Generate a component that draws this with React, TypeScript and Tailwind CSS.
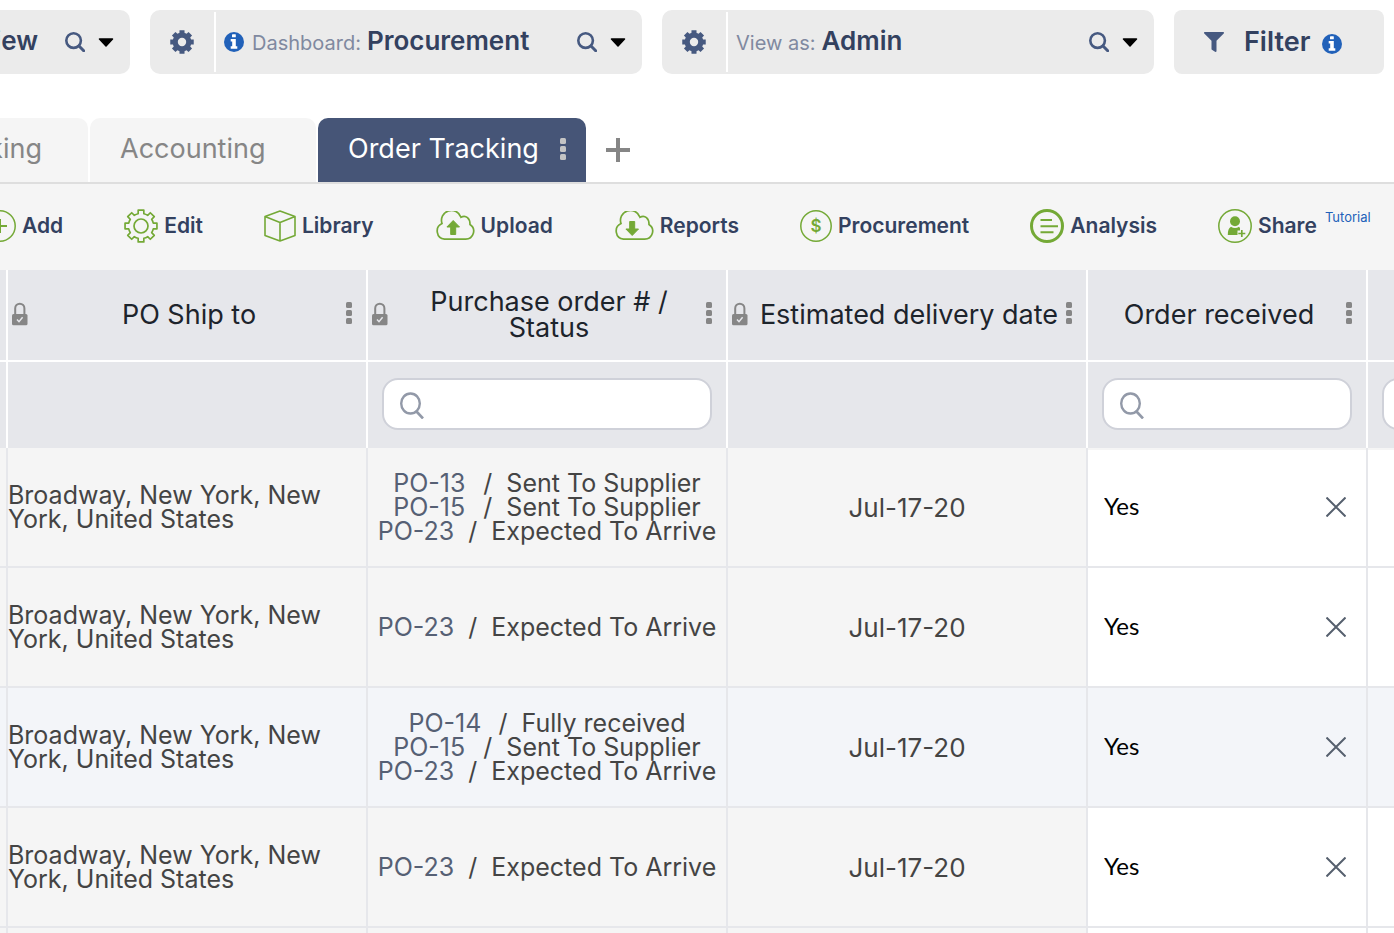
import type { ReactNode } from 'react';
import { FaFilter } from 'react-icons/fa';

interface OrderLine {
  po: string;
  status: string;
}

interface Row {
  id: number;
  shipTo: string;
  orders: OrderLine[];
  date: string;
  received: string;
  highlighted?: boolean;
}

const address = 'Broadway, New York, New York, United States';
const po13 = { po: 'PO-13', status: 'Sent To Supplier' };
const po14 = { po: 'PO-14', status: 'Fully received' };
const po15 = { po: 'PO-15', status: 'Sent To Supplier' };
const po23 = { po: 'PO-23', status: 'Expected To Arrive' };

const rows: Row[] = [
  { id: 1, shipTo: address, orders: [po13, po15, po23], date: 'Jul-17-20', received: 'Yes' },
  { id: 2, shipTo: address, orders: [po23], date: 'Jul-17-20', received: 'Yes' },
  { id: 3, shipTo: address, orders: [po14, po15, po23], date: 'Jul-17-20', received: 'Yes', highlighted: true },
  { id: 4, shipTo: address, orders: [po23], date: 'Jul-17-20', received: 'Yes' },
];

// Outline of a cog with flat-topped teeth
function gearPath(center: number, outer: number, root: number, tip: number, base: number) {
  const point = (radius: number, degrees: number) => {
    const angle = (degrees * Math.PI) / 180;
    return `${(center + radius * Math.cos(angle)).toFixed(2)} ${(center + radius * Math.sin(angle)).toFixed(2)}`;
  };
  const parts: string[] = [];
  for (let i = 0; i < 8; i++) {
    const a = i * 45;
    parts.push(
      `${i === 0 ? 'M' : `A${root} ${root} 0 0 1 `}${point(root, a - base)}`,
      `L${point(outer, a - tip)}`,
      `L${point(outer, a + tip)}`,
      `L${point(root, a + base)}`
    );
  }
  return `${parts.join('')}A${root} ${root} 0 0 1 ${point(root, -base)}Z`;
}

function CogIcon() {
  return (
    <svg className="size-6 shrink-0 fill-[#465980]" viewBox="0 0 24 24" aria-hidden="true">
      <path
        fillRule="evenodd"
        d={`${gearPath(12, 12, 9.4, 12, 16)}M12 7.8a4.2 4.2 0 1 0 0 8.4a4.2 4.2 0 1 0 0-8.4Z`}
      />
    </svg>
  );
}

function InfoIcon() {
  return (
    <svg className="size-5 shrink-0" viewBox="0 0 20 20" aria-hidden="true">
      <circle cx="10" cy="10" r="10" fill="#2161b9" />
      <rect x="8" y="2.300" width="3.800" height="3" rx=".4" fill="#fff" />
      <path d="M6.700 7h5.100v7.300h1.500v2.400H6.700v-2.400h1.500V9.400H6.700z" fill="#fff" />
    </svg>
  );
}

function SearchIcon() {
  return (
    <svg className="size-5 shrink-0" viewBox="0 0 20 20" fill="none" stroke="#465980" aria-hidden="true">
      <circle cx="8.6" cy="8.6" r="7.3" strokeWidth="2.600" />
      <path d="M14 14l4.700 4.700" strokeWidth="3" strokeLinecap="round" />
    </svg>
  );
}

function CaretIcon() {
  return (
    <svg className="h-[10px] w-4 shrink-0" viewBox="0 0 16 10" aria-hidden="true">
      <path d="M1.500 2h13L8 9z" stroke="#000" strokeWidth="1.500" strokeLinejoin="round" />
    </svg>
  );
}

function Dots({ className }: { className: string }) {
  return (
    <svg className={className} viewBox="0 0 6 22" fill="currentColor" aria-hidden="true">
      <rect width="6" height="6" rx="1.5" />
      <rect y="8" width="6" height="6" rx="1.5" />
      <rect y="16" width="6" height="6" rx="1.5" />
    </svg>
  );
}

function LockIcon() {
  return (
    <svg className="mb-0.5 h-6 w-4 shrink-0" viewBox="0 0 16 24" fill="none" aria-hidden="true">
      <path d="M3.200 13V6.300a4.600 4.600 0 0 1 9.200 0V13" stroke="#868686" strokeWidth="2" />
      <rect y="12" width="15.500" height="11.300" rx="1.500" fill="#868686" />
      <path d="M5 17.500l2 2.200l3.600-4.400" stroke="#e6e7eb" strokeWidth="1.500" />
    </svg>
  );
}

function CloudIcon({ arrow }: { arrow: string }) {
  return (
    <svg className="h-[30px] w-10" viewBox="0 0 40 30" aria-hidden="true">
      <path
        d="M9.500 28.200H30.500A8 8 0 0 0 35 13.500C35.200 7.500 31 3.500 26 6.200A9.800 9.800 0 0 0 7 12.600A8.200 8.200 0 0 0 9.500 28.200Z"
        fill="none"
        stroke="#74a936"
        strokeWidth="1.700"
      />
      <path d={arrow} fill="#74a936" stroke="#74a936" strokeLinejoin="round" />
    </svg>
  );
}

const actions: { label: string; icon: ReactNode }[] = [
  {
    label: 'Add',
    icon: (
      <svg className="size-8" viewBox="0 0 32 32" fill="none" stroke="#74a936" aria-hidden="true">
        <circle cx="16" cy="16" r="15.2" strokeWidth="1.5" />
        <path d="M9 16h14M16 9v14" strokeWidth="2" />
      </svg>
    ),
  },
  {
    label: 'Edit',
    icon: (
      <svg className="size-[34px]" viewBox="0 0 34 34" fill="none" stroke="#74a936" strokeWidth="1.7" aria-hidden="true">
        <path d={gearPath(17, 16.2, 12.6, 10, 13)} strokeLinejoin="round" />
        <circle cx="17" cy="17" r="7" />
      </svg>
    ),
  },
  {
    label: 'Library',
    icon: (
      <svg className="size-8" viewBox="0 0 32 32" fill="none" stroke="#74a936" strokeWidth="1.6" strokeLinejoin="round" aria-hidden="true">
        <path d="M16 1l15 5.500v19L16 31L1 25.500V6.500zM1 6.500l15 6l15-6M16 12.500V31" />
      </svg>
    ),
  },
  { label: 'Upload', icon: <CloudIcon arrow="M18.200 9.500l6.300 6.500h-3.800v7.500h-5V16h-3.800z" /> },
  { label: 'Reports', icon: <CloudIcon arrow="M18.200 24.500l6.300-6.500h-3.800v-7.500h-5V18h-3.800z" /> },
  {
    label: 'Procurement',
    icon: (
      <svg className="size-8" viewBox="0 0 32 32" aria-hidden="true">
        <circle cx="16" cy="16" r="15.200" fill="none" stroke="#74a936" strokeWidth="1.500" />
        <text x="16" y="22" textAnchor="middle" fill="#74a936" className="font-['Inter',sans-serif] text-[17px] font-semibold">
          $
        </text>
      </svg>
    ),
  },
  {
    label: 'Analysis',
    icon: (
      <svg className="size-[34px]" viewBox="0 0 34 34" fill="none" stroke="#74a936" aria-hidden="true">
        <circle cx="17" cy="17" r="15.500" strokeWidth="3" />
        <path d="M10.500 11H22M10.500 17.200H28M10.500 23.300h13" strokeWidth="2" />
      </svg>
    ),
  },
  {
    label: 'Share',
    icon: (
      <svg className="size-[34px]" viewBox="0 0 34 34" fill="#74a936" aria-hidden="true">
        <circle cx="17" cy="17" r="16.200" fill="none" stroke="#74a936" strokeWidth="1.500" />
        <circle cx="17" cy="12.300" r="5" />
        <path d="M13 17.800c2.500 1.600 5.500 1.600 8 0l1 1.200v2.500h-2.500v4.500H9.800c0-4 .8-7 3.200-8.200z" />
        <path d="M23.800 21v7M20.300 24.500h7" stroke="#74a936" strokeWidth="1.700" />
      </svg>
    ),
  },
];

function Picker({ label, value, info }: { label: string; value: string; info?: boolean }) {
  return (
    <div className="flex min-w-0 rounded-[10px] bg-[#ebebeb]">
      <button aria-label={`${value} settings`} className="flex w-16 shrink-0 items-center justify-center">
        <CogIcon />
      </button>
      <div className="my-0.5 w-0.5 shrink-0 bg-white" />
      <button className="flex min-w-0 flex-1 items-center gap-2 pl-2 pr-4">
        {info && <InfoIcon />}
        <span className="flex items-baseline gap-1.5 pb-1 whitespace-nowrap">
          <span className="text-xl text-[#8089a0]">{label}</span>
          <span className="text-[26px] font-semibold text-[#33415f]">{value}</span>
        </span>
        <span className="ml-auto flex items-center gap-[13px]">
          <SearchIcon />
          <CaretIcon />
        </span>
      </button>
    </div>
  );
}

function HeaderCell({ title, locked }: { title: string; locked?: boolean }) {
  return (
    <th scope="col" className="border-b-2 border-r-2 border-white bg-[#e6e7eb] p-0 font-normal">
      <div className="flex items-center gap-1 pl-1 pr-[14px]">
        {locked && <LockIcon />}
        <span className="flex-1 text-center text-[27px] leading-[26px] text-[#1d242c]">{title}</span>
        <button aria-label={`${title} menu`} className="-ml-1 mb-1 text-[#868686]">
          <Dots className="h-[22px] w-1.5" />
        </button>
      </div>
    </th>
  );
}

function FilterBox({ name }: { name: string }) {
  return (
    <label className="mx-[14px] flex h-[52px] items-center rounded-2xl border-2 border-[#cfd1d9] bg-white px-4">
      <svg className="mt-0.5 size-7 shrink-0" viewBox="0 0 28 28" fill="none" stroke="#9299a8" aria-hidden="true">
        <ellipse cx="10.500" cy="12.500" rx="9.300" ry="10" strokeWidth="2.400" />
        <path d="M16.500 20.500l6.500 7" strokeWidth="2.600" />
      </svg>
      <input type="text" aria-label={`Search ${name}`} className="min-w-0 flex-1 pl-2 text-[22px] outline-none" />
    </label>
  );
}

function OrderRow({ row }: { row: Row }) {
  const shade = row.highlighted ? 'bg-[#f3f5f9]' : 'bg-[#f5f5f5]';
  const editable = row.highlighted ? 'bg-[#f3f5f9]' : 'bg-white group-first:shadow-[inset_0_2px_#f5f5f5]';
  const cell = 'h-[120px] border-b-2 border-[#e6e7eb] p-0';

  return (
    <tr className="group">
      <td className={`${cell} ${shade} border-r-2`} />
      <td className={`${cell} ${shade} border-r-2 text-[25px] leading-6 text-[#444]`}>{row.shipTo}</td>
      <td className={`${cell} ${shade} border-r-2 text-[25px] leading-6 text-[#444]`}>
        {row.orders.map((order) => (
          <div key={order.po} className="flex justify-center gap-[14px] whitespace-nowrap">
            <a href={`#${order.po}`} className="min-w-[76px] text-[#566074]">
              {order.po}
            </a>
            <span>/&nbsp; {order.status}</span>
          </div>
        ))}
      </td>
      <td className={`${cell} ${shade} border-r-2 text-center text-[26px] text-[#444]`}>{row.date}</td>
      <td className={`${cell} ${editable} border-r-2`}>
        <div className="flex items-center justify-between pl-4 pr-5">
          <input
            aria-label="Order received"
            defaultValue={row.received}
            className="w-40 bg-transparent pb-0.5 font-['Lato',sans-serif] text-2xl text-black outline-none"
          />
          <button aria-label="Clear">
            <svg className="size-5" viewBox="0 0 20 20" stroke="#56606e" strokeWidth="2" aria-hidden="true">
              <path d="M.5.5l19 19M19.500.5l-19 19" />
            </svg>
          </button>
        </div>
      </td>
      <td className={`${cell} ${editable}`} />
    </tr>
  );
}

export default function App() {
  const filterCell = 'h-[86px] border-r-2 border-white bg-[#e6e7eb] p-0 pb-0.5 font-normal';

  return (
    <div className="h-screen overflow-hidden bg-white font-['Inter',sans-serif]">
      {/* Pickers */}
      <header className="grid h-[84px] grid-cols-[130px_1fr_1fr_210px] gap-5 py-[10px] pr-[10px]">
        <button className="flex items-center justify-end overflow-hidden rounded-r-[10px] bg-[#ebebeb] pr-4">
          <span className="mr-[27px] pb-1 text-[26px] font-semibold text-[#33415f]">View</span>
          <span className="flex items-center gap-[13px]">
            <SearchIcon />
            <CaretIcon />
          </span>
        </button>
        <Picker label="Dashboard:" value="Procurement" info />
        <Picker label="View as:" value="Admin" />
        <button className="flex items-center rounded-lg bg-[#ebebeb] pl-[30px]">
          <FaFilter className="size-5 text-[#465980]" />
          <span className="ml-5 mr-3 text-[27px] font-semibold text-[#33415f]">Filter</span>
          <span className="pt-1">
            <InfoIcon />
          </span>
        </button>
      </header>

      {/* Tabs */}
      <nav className="mt-[34px] flex h-[66px] gap-0.5 border-b-2 border-[#dedede] text-[27px]">
        <button className="flex w-[88px] items-center justify-end overflow-hidden rounded-tr-[10px] bg-[#f5f5f5] pb-0.5 pr-[46px] text-[#868686]">
          Tracking
        </button>
        <button className="w-[226px] rounded-t-[10px] bg-[#f5f5f5] pb-0.5 pl-[30px] text-left text-[#868686]">
          Accounting
        </button>
        <button className="flex w-[268px] items-center justify-between rounded-t-[10px] bg-[#465577] pb-0.5 pl-[30px] pr-5 text-white">
          Order Tracking
          <Dots className="h-[22px] w-1.5 text-[#c4c4c4]" />
        </button>
        <button aria-label="Add tab" className="ml-[18px]">
          <svg className="size-6" viewBox="0 0 24 24" stroke="#868686" strokeWidth="4" aria-hidden="true">
            <path d="M12 0v24M0 12h24" />
          </svg>
        </button>
      </nav>

      {/* Toolbar */}
      <div className="flex h-[86px] items-center gap-[61px] overflow-hidden bg-[#f5f5f5] pb-0.5 whitespace-nowrap">
        {actions.map((action) => (
          <button
            key={action.label}
            className="flex shrink-0 items-center gap-1.5 text-[21px] font-semibold text-[#33415f] first:-ml-4"
          >
            {action.icon}
            {action.label}
          </button>
        ))}
        <a href="#tutorial" className="-ml-[53px] mb-4 text-[13px] text-[#2161b9]">
          Tutorial
        </a>
      </div>

      {/* Orders */}
      <table className="w-full table-fixed border-separate border-spacing-0">
        <colgroup>
          <col className="w-2" />
          <col className="w-[360px]" />
          <col className="w-[360px]" />
          <col className="w-[360px]" />
          <col className="w-[280px]" />
          <col />
        </colgroup>
        <thead>
          <tr className="h-[92px]">
            <th className="border-b-2 border-r-2 border-white bg-[#e6e7eb] p-0" />
            <HeaderCell title="PO Ship to" locked />
            <HeaderCell title="Purchase order # / Status" locked />
            <HeaderCell title="Estimated delivery date" locked />
            <HeaderCell title="Order received" />
            <th className="border-b-2 border-white bg-[#e6e7eb] p-0" />
          </tr>
          <tr>
            <th className={filterCell} />
            <th className={filterCell} />
            <th className={filterCell}>
              <FilterBox name="purchase orders" />
            </th>
            <th className={filterCell} />
            <th className={filterCell}>
              <FilterBox name="order received" />
            </th>
            <th className="overflow-hidden bg-[#e6e7eb] p-0 pb-0.5 font-normal">
              <div className="w-[250px]">
                <FilterBox name="next column" />
              </div>
            </th>
          </tr>
        </thead>
        <tbody>
          {rows.map((row) => (
            <OrderRow key={row.id} row={row} />
          ))}
          <tr>
            {[0, 1, 2, 3, 4].map((i) => (
              <td key={i} className={`h-[120px] border-r-2 border-[#e6e7eb] ${i < 4 ? 'bg-[#f5f5f5]' : ''}`} />
            ))}
            <td />
          </tr>
        </tbody>
      </table>
    </div>
  );
}
